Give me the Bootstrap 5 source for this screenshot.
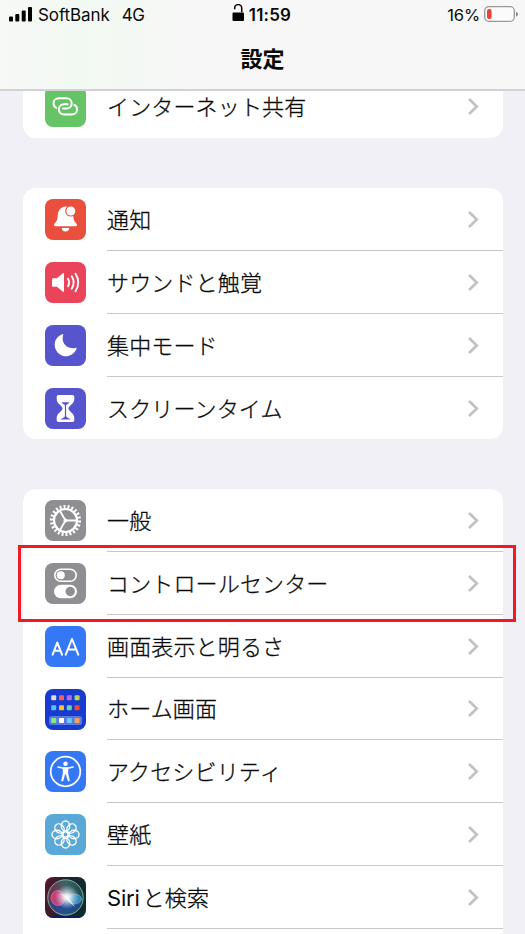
<!DOCTYPE html>
<html lang="ja">
<head>
<meta charset="utf-8">
<meta name="viewport" content="width=device-width, initial-scale=1">
<title>設定</title>
<link href="https://cdn.jsdelivr.net/npm/bootstrap@5.3.0/dist/css/bootstrap.min.css" rel="stylesheet">
<style>
html,body{height:934px;overflow:hidden}
body{background:#f0f0f6;color:#0a0a0a;font-family:Inter,"Noto Sans CJK JP",sans-serif}
.top-bar{height:91px;background:linear-gradient(90deg,#f7f8f7 0,#f2f9f2 14%,#f7f7f7 40%,#f7f7f7);border-bottom:2px solid #d2d2d4}
.status{height:30px;font-size:17px;line-height:30px}
.status .side{width:200px}
.carrier{margin-left:5px;letter-spacing:-.1px}
.net{margin-left:12px;letter-spacing:-.3px}
.pct{margin-right:3px;font-size:16.5px;letter-spacing:-.1px}
.status .side:last-child{padding-right:6px}
.clock{font-weight:600;font-size:17px;margin-left:4px;letter-spacing:.2px}
.status .mid{margin-left:-2px}
.page-title{font-size:22px;line-height:30px;font-weight:700;margin-top:14px}
.list-area{height:843px}
.group{width:480px;margin-left:23px;border-radius:13px;background:#fff}
.g-first{height:63px;margin-top:-16px}
.g-gap{margin-top:50px}
.item{height:63px;padding-left:22px}
.item.short{height:62px}
.item>svg{width:41px;height:41px;margin-top:11px;flex:none}
.label{margin-left:21px;border-bottom:1px solid #c8c8ca;padding-right:24px;height:100%}
.group>.item:last-child .label{border-bottom:0}
.label span{font-size:22px;line-height:30px;font-weight:300;-webkit-text-stroke:.3px #0a0a0a;letter-spacing:.15px;white-space:nowrap;padding-top:1px}
.label b{font-weight:400;-webkit-text-stroke:0;letter-spacing:-.2px;margin-right:3px}
.chev{width:12px;height:19px;display:block}
.marker{position:absolute;left:-5px;top:-7px;width:498px;height:77px;border:3px solid #ed1c24;z-index:3}
</style>
</head>
<body>
<svg width="0" height="0" class="position-absolute"><defs>
<symbol id="chev" viewBox="0 0 12 19"><path d="M2 2l7.8 7.5L2 17" fill="none" stroke="#c2c2c5" stroke-width="2.700"/></symbol>
</defs></svg>

<header class="top-bar">
  <div class="status d-flex justify-content-between">
    <div class="side d-flex align-items-center">
      <svg width="24" height="16" viewBox="0 0 24 16" style="margin-left:9px"><rect x="0" y="9.500" width="4" height="5" rx="1"/><rect x="6.300" y="7" width="4" height="7.500" rx="1"/><rect x="12.700" y="3.500" width="4" height="11" rx="1"/><rect x="19" y="0" width="4" height="14.500" rx="1"/></svg>
      <span class="carrier">SoftBank</span><span class="net">4G</span>
    </div>
    <div class="mid d-flex align-items-center">
      <svg width="13" height="22" viewBox="0 0 13 22"><rect x="0.500" y="8.500" width="11.500" height="8.500" rx="1"/><path d="M2.700 6V4.900a3.500 3.500 0 0 1 7 0V9" transform="translate(0 -.8)" fill="none" stroke="#000" stroke-width="1.500"/></svg>
      <span class="clock">11:59</span>
    </div>
    <div class="side d-flex align-items-center justify-content-end">
      <span class="pct">16%</span>
      <svg width="36" height="20" viewBox="0 0 36 20" class="flex-shrink-0"><rect x="1.700" y="1.700" width="29.600" height="14.600" rx="4" fill="#fbfbfb" stroke="#999" stroke-width="1.300"/><rect x="4" y="4" width="4.600" height="10" rx="2" fill="#eb4334"/><path d="M33 6.700a2.600 2.600 0 0 1 0 5z" fill="#888"/></svg>
    </div>
  </div>
  <h1 class="page-title text-center mb-0">設定</h1>
</header>

<main class="list-area overflow-hidden">
<section class="group g-first">
  <div class="item d-flex">
    <svg viewBox="0 0 41 41"><rect width="41" height="41" rx="8" fill="#65c466"/><g fill="none" stroke="#fff" stroke-width="2" stroke-linecap="round"><path d="M11.300 21.800C9.500 20.800 8.500 19.200 8.500 17.500c0-3 2.300-5.200 5.500-5.200h7.300c3.200 0 5.400 2.300 5.400 5.100s-2.200 5-5.400 5h-3.300"/><path d="M29.400 18.900c1.800 1 2.700 2.600 2.700 4.400 0 3-2.300 5.200-5.500 5.200h-7.300c-3.200 0-5.400-2.300-5.400-5.200s2.200-5 5.400-5h3.300"/></g></svg>
    <div class="label flex-grow-1 d-flex align-items-center justify-content-between"><span>インターネット共有</span><svg class="chev"><use href="#chev"/></svg></div>
  </div>
</section>

<section class="group g-gap">
  <div class="item d-flex">
    <svg viewBox="0 0 41 41"><rect width="41" height="41" rx="8" fill="#ea4e3d"/><path d="M20.500 7.500c-5.300.5-7.800 4.500-7.800 9.500 0 6-3.700 7-3.700 9 0 .8.500 1.200 1.300 1.200h20.400c.8 0 1.300-.4 1.300-1.200 0-2-3.700-3-3.700-9 0-5-2.500-9-7.800-9.500z" fill="#fff"/><path d="M16.800 29h7.400a3.700 3.400 0 0 1-7.400 0z" fill="#fff"/><circle cx="25.800" cy="12" r="5.600" fill="#ea4e3d"/><circle cx="25.800" cy="12" r="4.500" fill="#fff"/></svg>
    <div class="label flex-grow-1 d-flex align-items-center justify-content-between"><span>通知</span><svg class="chev"><use href="#chev"/></svg></div>
  </div>
  <div class="item d-flex">
    <svg viewBox="0 0 41 41"><rect width="41" height="41" rx="8" fill="#ea445a"/><path d="M8.500 16.300h3.500l5.600-4.900c.7-.6 1.400-.3 1.400.6v17c0 .9-.7 1.200-1.400.6L12 24.700H8.500c-1 0-1.500-.5-1.500-1.500v-5.400c0-1 .5-1.500 1.500-1.500z" fill="#fff"/><g fill="none" stroke="#fff" stroke-width="1.900" stroke-linecap="round"><path d="M23 16.800q2.200 3.700 0 7.400M26.700 14.300q4 6.200 0 12.400M30.500 11.800q5.600 8.700 0 17.400"/></g></svg>
    <div class="label flex-grow-1 d-flex align-items-center justify-content-between"><span>サウンドと触覚</span><svg class="chev"><use href="#chev"/></svg></div>
  </div>
  <div class="item d-flex">
    <svg viewBox="0 0 41 41"><rect width="41" height="41" rx="8" fill="#5655ce"/><path d="M17.300 9.200c.8-.3 1.200.1.900.9C16 17 20.500 24.600 30.500 22.900c.9-.2 1.300.3 1 1.100A11.300 11.300 0 1 1 17.300 9.200z" fill="#fff"/></svg>
    <div class="label flex-grow-1 d-flex align-items-center justify-content-between"><span>集中モード</span><svg class="chev"><use href="#chev"/></svg></div>
  </div>
  <div class="item short d-flex">
    <svg viewBox="0 0 41 41"><rect width="41" height="41" rx="8" fill="#5655ce"/><path d="M13.500 7h14q1.800 0 1.800 1.800V11c0 5-5.800 6.500-5.800 9.500s5.800 4.500 5.800 9.500v2.200q0 1.800-1.800 1.800h-14q-1.800 0-1.800-1.800V30c0-5 5.800-6.500 5.800-9.500S11.700 16 11.700 11V8.800Q11.700 7 13.500 7z" fill="#fff"/><path d="M16.500 14.300h8q-1.500 2-3.400 2.700v11.500q1.500 1.700 4.700 3H15.200q3.200-1.300 4.700-3V17q-1.900-.7-3.400-2.700z" fill="#5655ce"/></svg>
    <div class="label flex-grow-1 d-flex align-items-center justify-content-between"><span>スクリーンタイム</span><svg class="chev"><use href="#chev"/></svg></div>
  </div>
</section>

<section class="group g-gap">
  <div class="item d-flex">
    <svg viewBox="0 0 41 41"><rect width="41" height="41" rx="8" fill="#8e8e93"/><g fill="none" stroke="#fff"><circle cx="20.500" cy="20.500" r="11.500" stroke-width="2.200"/><circle cx="20.500" cy="20.500" r="13.900" stroke-width="3.400" pathLength="44" stroke-dasharray="1 1"/><path d="M20.500 20.500h11M20.500 20.500l-5.500 9.500M20.500 20.500L15 11" stroke-width="1.800"/></g><circle cx="20.500" cy="20.500" r="2" fill="#fff"/></svg>
    <div class="label flex-grow-1 d-flex align-items-center justify-content-between"><span>一般</span><svg class="chev"><use href="#chev"/></svg></div>
  </div>
  <div class="item d-flex position-relative">
    <svg viewBox="0 0 41 41"><rect width="41" height="41" rx="8" fill="#8e8e93"/><rect x="9.800" y="6.300" width="21.400" height="12" rx="6" fill="none" stroke="#fff" stroke-width="1.600"/><circle cx="15.800" cy="12.300" r="4" fill="#fff"/><rect x="9" y="21.700" width="23" height="13.600" rx="6.800" fill="#fff"/><circle cx="25.200" cy="28.500" r="4.700" fill="#8e8e93"/></svg>
    <div class="label flex-grow-1 d-flex align-items-center justify-content-between"><span>コントロールセンター</span><svg class="chev"><use href="#chev"/></svg></div>
    <div class="marker"></div>
  </div>
  <div class="item d-flex">
    <svg viewBox="0 0 41 41"><rect width="41" height="41" rx="8" fill="#3478f6"/><g fill="none" stroke="#fff" stroke-width="2" stroke-linecap="round" stroke-linejoin="round"><path d="M7.600 28.700l4.700-12.200 4.700 12.200M9.200 24.700h6.200M20.700 28.700L27 13l6.300 15.700M22.800 23.500h8.400"/></g></svg>
    <div class="label flex-grow-1 d-flex align-items-center justify-content-between"><span>画面表示と明るさ</span><svg class="chev"><use href="#chev"/></svg></div>
  </div>
  <div class="item short d-flex">
    <svg viewBox="0 0 41 41"><rect width="41" height="41" rx="8" fill="#173bd0"/><rect x="4" y="27" width="33" height="9" rx="2.500" fill="#5a78de"/><g><rect x="6.200" y="6.200" width="5" height="5" rx="1" fill="#dcdcdc"/><rect x="14" y="6.200" width="5" height="5" rx="1" fill="#fc5b5c"/><rect x="21.800" y="6.200" width="5" height="5" rx="1" fill="#b56cf2"/><rect x="29.600" y="6.200" width="5" height="5" rx="1" fill="#bcd945"/><rect x="6.200" y="16.200" width="5" height="5" rx="1" fill="#5ac0fa"/><rect x="14" y="16.200" width="5" height="5" rx="1" fill="#fcc02e"/><rect x="21.800" y="16.200" width="5" height="5" rx="1" fill="#6bd4a4"/><rect x="29.600" y="16.200" width="5" height="5" rx="1" fill="#fb4731"/><rect x="6.200" y="29" width="5" height="5" rx="1" fill="#80ef78"/><rect x="14" y="29" width="5" height="5" rx="1" fill="#fff"/><rect x="21.800" y="29" width="5" height="5" rx="1" fill="#62ccfb"/><rect x="29.600" y="29" width="5" height="5" rx="1" fill="#fca04e"/></g></svg>
    <div class="label flex-grow-1 d-flex align-items-center justify-content-between"><span>ホーム画面</span><svg class="chev"><use href="#chev"/></svg></div>
  </div>
  <div class="item d-flex">
    <svg viewBox="0 0 41 41"><rect width="41" height="41" rx="8" fill="#3478f6"/><circle cx="20.500" cy="20.500" r="14.800" fill="none" stroke="#fff" stroke-width="1.700"/><circle cx="20.500" cy="12.700" r="2.200" fill="#fff"/><path d="M13 16l5.500 1.200h4L28 16" fill="none" stroke="#fff" stroke-width="1.600" stroke-linecap="round"/><path d="M18 16.500h5v6l1.600 7.300-1.500.4-2.100-7h-1l-2.100 7-1.500-.4L18 22.500z" fill="#fff" stroke="#fff" stroke-width=".4"/></svg>
    <div class="label flex-grow-1 d-flex align-items-center justify-content-between"><span>アクセシビリティ</span><svg class="chev"><use href="#chev"/></svg></div>
  </div>
  <div class="item d-flex">
    <svg viewBox="0 0 41 41"><rect width="41" height="41" rx="8" fill="#59a8d8"/><g fill="none" stroke="#fff" stroke-width="1.400"><g id="pet"><ellipse cx="20.500" cy="12" rx="4.200" ry="5"/><ellipse cx="20.500" cy="29" rx="4.200" ry="5"/><ellipse cx="12" cy="20.500" rx="5" ry="4.200"/><ellipse cx="29" cy="20.500" rx="5" ry="4.200"/></g><use href="#pet" transform="rotate(45 20.500 20.500)"/><circle cx="20.500" cy="20.500" r="2.600"/></g></svg>
    <div class="label flex-grow-1 d-flex align-items-center justify-content-between"><span>壁紙</span><svg class="chev"><use href="#chev"/></svg></div>
  </div>
  <div class="item d-flex">
    <svg viewBox="0 0 41 41"><defs><linearGradient id="sb" x1="0" y1="0" x2="1" y2=".2"><stop offset="0" stop-color="#5c1430"/><stop offset=".5" stop-color="#20242c"/><stop offset="1" stop-color="#0e2c2c"/></linearGradient><radialGradient id="sg"><stop offset="0" stop-color="#fff"/><stop offset=".22" stop-color="#fff" stop-opacity=".85"/><stop offset="1" stop-color="#cfe0ff" stop-opacity="0"/></radialGradient><linearGradient id="so" x1="0" y1="0" x2="1" y2="0"><stop offset="0" stop-color="#8d2850"/><stop offset=".5" stop-color="#4a7a78"/><stop offset="1" stop-color="#1b5560"/></linearGradient></defs><rect width="41" height="41" rx="8" fill="url(#sb)"/><path d="M5 41q15-8 31 0z" fill="#121a60"/><circle cx="20.500" cy="20.500" r="17.700" fill="url(#so)" fill-opacity=".75" stroke="#7fb2a6" stroke-width="1"/><path d="M4 25a17.500 17.500 0 0 0 33 0q-9 5-16.500-2T4 25z" fill="#1d489c" opacity=".75"/><ellipse cx="13" cy="21" rx="7" ry="7.500" fill="#e8427d" opacity=".75" stroke="#ff9ec0" stroke-width=".6"/><ellipse cx="29" cy="22" rx="7.500" ry="5" fill="#3596cf" opacity=".8" stroke="#8fd8f5" stroke-width=".6"/><circle cx="22" cy="20" r="12" fill="url(#sg)"/><path d="M14 17q9 0 16 13-7-6-9-10z" fill="#fff" opacity=".7"/></svg>
    <div class="label flex-grow-1 d-flex align-items-center justify-content-between"><span><b>Siri</b>と検索</span><svg class="chev"><use href="#chev"/></svg></div>
  </div>
  <div class="item"></div>
</section>
</main>
<script src="https://cdn.jsdelivr.net/npm/bootstrap@5.3.0/dist/js/bootstrap.bundle.min.js"></script>
</body>
</html>
